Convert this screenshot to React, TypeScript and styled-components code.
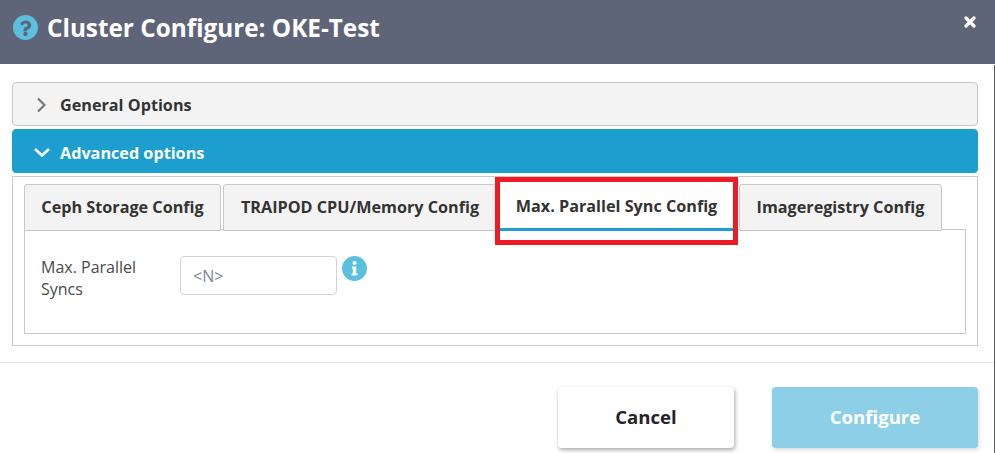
import React from "react";
import styled, { createGlobalStyle } from "styled-components";

const Global = createGlobalStyle`
  html, body { margin: 0; padding: 0; background: #fff; }
  body { font-family: "Open Sans", "Liberation Sans", sans-serif; color: #333; }
`;

const Modal = styled.div`
  width: 995px;
  height: 453px;
  overflow: hidden;
  display: flex;
  flex-direction: column;
  background: #fff;
  box-sizing: border-box;
`;

const Header = styled.header`
  height: 64px;
  flex: none;
  background: #5f6578;
  display: flex;
  align-items: flex-start;
  padding: 14px 19px 0 13px;
  box-sizing: border-box;
  gap: 9px;
  color: #fff;
`;

const Title = styled.h1`
  margin: 0;
  font-size: 24.3px;
  line-height: 28px;
  font-weight: 700;
  flex: 1;
`;

const CloseIcon = styled.svg`
  width: 12px;
  height: 12px;
  margin-top: 2px;
`;

const Content = styled.div`
  flex: 1;
  display: flex;
  flex-direction: column;
  border-right: 1px solid #5c5c5c;
  margin-top: 1px;
`;

const Body = styled.div`
  flex: none;
  height: 298px;
  padding: 17px 16px 0 12px;
  box-sizing: border-box;
  display: flex;
  flex-direction: column;
  gap: 3px;
  border-bottom: 1px solid #e3e5e6;
`;

const AccordionHead = styled.div<{ $open?: boolean }>`
  height: 44px;
  flex: none;
  box-sizing: border-box;
  display: flex;
  align-items: center;
  border-radius: 4px;
  border: 1px solid ${(p) => (p.$open ? "#1c9fce" : "#c8c8c8")};
  background: ${(p) => (p.$open ? "#1c9fce" : "#f3f3f3")};
  color: ${(p) => (p.$open ? "#fff" : "#333")};
  font-size: 16.2px;
  font-weight: 700;
  padding: ${(p) => (p.$open ? "4px" : "2px")} 0 0 20px;
`;

const Chevron = styled.svg<{ $open?: boolean }>`
  width: 18px;
  height: 18px;
  margin-right: 9px;
  margin-top: ${(p) => (p.$open ? "-3px" : "-1px")};
  flex: none;
`;

const AccordionPanel = styled.div`
  height: 170px;
  flex: none;
  box-sizing: border-box;
  border: 1px solid #c8c8c8;
  padding: 7px 11px 0;
`;

const TabRow = styled.div`
  display: flex;
  height: 47px;
  gap: 2px;
  position: relative;
  z-index: 1;
`;

const Tab = styled.div<{ $active?: boolean; $w: number; $gap?: number }>`
  position: relative;
  width: ${(p) => p.$w}px;
  margin-left: ${(p) => p.$gap ?? 0}px;
  box-sizing: border-box;
  display: flex;
  align-items: center;
  justify-content: center;
  height: 47px;
  font-size: 16.2px;
  font-weight: 700;
  padding-bottom: 1px;
  border-radius: 3px 3px 0 0;
  color: #333;
  background: ${(p) => (p.$active ? "#fff" : "#f3f3f3")};
  border: ${(p) => (p.$active ? "0" : "1px solid #c8c8c8")};
  border-bottom: ${(p) => (p.$active ? "3px solid #1c9fce" : "1px solid #c8c8c8")};
`;

const Highlight = styled.div`
  position: absolute;
  left: -5px;
  top: -7px;
  width: 243px;
  height: 68px;
  box-sizing: border-box;
  border: 5px solid #ed1c24;
  pointer-events: none;
`;

const Pane = styled.div`
  height: 105px;
  margin-top: -2px;
  box-sizing: border-box;
  border: 1px solid #c8c8c8;
  padding: 26px 16px 0;
  display: flex;
  align-items: flex-start;
`;

const FieldLabel = styled.label`
  width: 139px;
  flex: none;
  font-size: 16px;
  line-height: 22px;
  color: #4a4a4a;
`;

const Input = styled.input`
  width: 157px;
  height: 39px;
  box-sizing: border-box;
  border: 1px solid #ced4da;
  border-radius: 4px;
  padding: 0 12px;
  font-family: inherit;
  font-size: 16px;
  flex: none;
  outline: none;
  &::placeholder { color: #7b8794; opacity: 1; }
`;

const InfoIcon = styled.svg`
  width: 25px;
  height: 25px;
  margin-left: 5px;
  flex: none;
`;

const Footer = styled.footer`
  flex: 1;
  display: flex;
  justify-content: flex-end;
  align-items: flex-start;
  padding: 24px 16px 0 0;
  gap: 38px;
`;

const Button = styled.button<{ $primary?: boolean; $w: number }>`
  width: ${(p) => p.$w}px;
  height: 61px;
  border: 0;
  border-radius: 4px;
  font-family: inherit;
  font-size: 18.6px;
  font-weight: 700;
  padding: 0 0 2px;
  color: ${(p) => (p.$primary ? "#fff" : "#212529")};
  background: ${(p) => (p.$primary ? "#8dcfe6" : "#fff")};
  box-shadow: ${(p) =>
    p.$primary ? "1px 2px 4px rgba(0,0,0,0.15)" : "1px 2px 4px rgba(0,0,0,0.35)"};
`;

const App = () => (
  <>
    <Global />
    <Modal>
      <Header>
        <svg width="25" height="25" viewBox="0 0 512 512" style={{ flex: "none", marginTop: 1 }}>
          <circle cx="256" cy="256" r="256" fill="#5bc0de" />
          <path
            fill="#5f6578"
            d="M267 112c-53 0-87 22-114 62-4 5-3 12 2 16l29 22c5 4 13 3 17-2 17-21 29-34 55-34 21 0 46 13 46 33 0 15-12 23-33 34-23 13-54 30-54 71v6c0 7 5 12 12 12h48c7 0 12-5 12-12v-4c0-29 84-30 84-107 0-58-60-97-104-97zm-11 232c-24 0-44 20-44 44s20 44 44 44 44-20 44-44-20-44-44-44z"
          />
        </svg>
        <Title>Cluster Configure: OKE-Test</Title>
        <CloseIcon viewBox="0 0 12 12">
          <path d="M2 2l8 8M10 2l-8 8" stroke="#fff" strokeWidth="3.2" strokeLinecap="round" />
        </CloseIcon>
      </Header>
      <Content>
        <Body>
          <AccordionHead>
            <Chevron viewBox="0 0 18 18">
              <path d="M5 2.500l6.500 6.500-6.500 6.500" fill="none" stroke="#7a7a7a" strokeWidth="2.200" />
            </Chevron>
            General Options
          </AccordionHead>
          <AccordionHead $open>
            <Chevron $open viewBox="0 0 18 18">
              <path d="M2 6l7 6.500L16 6" fill="none" stroke="#fff" strokeWidth="2.600" />
            </Chevron>
            Advanced options
          </AccordionHead>
          <AccordionPanel>
            <TabRow>
              <Tab $w={197}>Ceph Storage Config</Tab>
              <Tab $w={274}>TRAIPOD CPU/Memory Config</Tab>
              <Tab $active $w={233} $gap={1}>
                Max. Parallel Sync Config
                <Highlight />
              </Tab>
              <Tab $w={203} $gap={4}>Imageregistry Config</Tab>
            </TabRow>
            <Pane>
              <FieldLabel>Max. Parallel Syncs</FieldLabel>
              <Input placeholder="<N>" readOnly />
              <InfoIcon viewBox="0 0 25 25">
                <circle cx="12.500" cy="12.500" r="12.500" fill="#5bc0de" />
                <circle cx="12.500" cy="7" r="2" fill="#fff" />
                <path d="M10 10.500h4.200v7H15.500V19.500h-6v-2h1.300v-5H10z" fill="#fff" />
              </InfoIcon>
            </Pane>
          </AccordionPanel>
        </Body>
        <Footer>
          <Button $w={176}>Cancel</Button>
          <Button $primary $w={206}>Configure</Button>
        </Footer>
      </Content>
    </Modal>
  </>
);

export default App;
